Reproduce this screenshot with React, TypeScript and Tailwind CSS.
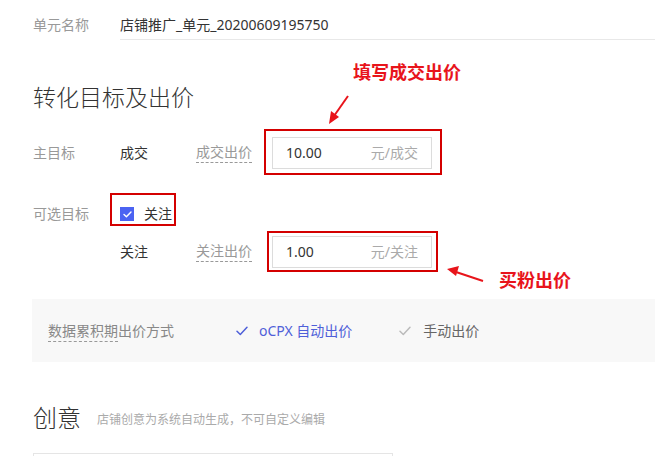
import React from "react";

const font = { fontFamily: '"Noto Sans", "Noto Sans CJK SC", sans-serif' };

function Check({ color }: { color: string }) {
  return (
    <svg width="12" height="10" viewBox="0 0 12 10" fill="none">
      <path d="M1 5.2 L4.3 8.5 L11 1.2" stroke={color} strokeWidth="1.5" strokeLinecap="round" strokeLinejoin="round" />
    </svg>
  );
}

function PriceInput({ value, suffix }: { value: string; suffix: string }) {
  return (
    <div className="w-[160px] h-[32px] border border-[#dcdcdc] flex items-center justify-between pl-[13px] pr-[13px] text-[14px] leading-[18px]">
      <span className="text-[#333]">{value}</span>
      <span className="text-[#aaa]">{suffix}</span>
    </div>
  );
}

export default function App() {
  return (
    <div className="relative w-[655px] h-[456px] overflow-hidden bg-white text-[14px] leading-[18px]" style={font}>
      <div className="pl-[33px] flex flex-col">
        {/* unit name */}
        <div className="flex mt-[10px] h-[30px]">
          <div className="w-[87px] flex items-center text-[#999]">单元名称</div>
          <div className="flex-1 flex items-center border-b border-[#e8e8e8] text-[#333]">店铺推广_单元_20200609195750</div>
        </div>

        {/* heading */}
        <div className="mt-[42px] h-[30px] leading-[30px] text-[23px] font-light text-[#333]">转化目标及出价</div>

        {/* main goal */}
        <div className="mt-[25px] h-[32px] flex items-center">
          <div className="w-[87px] text-[#999]">主目标</div>
          <div className="w-[76px] text-[#333]">成交</div>
          <div className="w-[76px]">
            <span className="inline-block text-[#999] border-b border-dashed border-[#999] pb-[1px]">成交出价</span>
          </div>
          <PriceInput value="10.00" suffix="元/成交" />
        </div>

        {/* optional goal */}
        <div className="mt-[35px] h-[20px] flex items-center">
          <div className="w-[87px] text-[#999]">可选目标</div>
          <div className="flex items-center gap-[10px]">
            <div className="w-[14px] h-[14px] bg-[#4b63f2] flex items-center justify-center">
              <svg width="9" height="7" viewBox="0 0 9 7" fill="none">
                <path d="M1 3.5 L3.4 5.8 L8 1" stroke="white" strokeWidth="1.4" strokeLinecap="round" strokeLinejoin="round" />
              </svg>
            </div>
            <span className="text-[#333]">关注</span>
          </div>
        </div>

        {/* follow price */}
        <div className="mt-[12px] h-[32px] flex items-center">
          <div className="w-[87px]" />
          <div className="w-[76px] text-[#333]">关注</div>
          <div className="w-[76px]">
            <span className="inline-block text-[#999] border-b border-dashed border-[#999] pb-[1px]">关注出价</span>
          </div>
          <PriceInput value="1.00" suffix="元/关注" />
        </div>

        {/* panel */}
        <div className="mt-[31px] -ml-px h-[63px] bg-[#f8f8f8] flex items-center pl-[16px]">
          <div className="w-[188px] text-[#888]">
            <span className="border-b border-dashed border-[#999] pb-[1px]">数据累积期</span>出价方式
          </div>
          <div className="flex items-center gap-[11px] text-[#4f60d9]">
            <Check color="#4f60d9" />
            <span>oCPX 自动出价</span>
          </div>
          <div className="ml-[47px] flex items-center gap-[12px] text-[#666]">
            <Check color="#bbbbbb" />
            <span>手动出价</span>
          </div>
        </div>

        {/* creative */}
        <div className="mt-[40px] h-[32px] flex items-end gap-[16px]">
          <span className="text-[24px] leading-[32px] font-light text-[#333]">创意</span>
          <span className="text-[12px] leading-[16px] text-[#aaa] pb-[6px]">店铺创意为系统自动生成，不可自定义编辑</span>
        </div>

        <div className="mt-[19px] w-[360px] h-[40px] border border-[#e5e5e5]" />
      </div>

      {/* annotations */}
      <div className="absolute left-[264px] top-[129px] w-[178px] h-[46px] border-2 border-[#d40000]" />
      <div className="absolute left-[110px] top-[193px] w-[66px] h-[33px] border-2 border-[#d40000]" />
      <div className="absolute left-[267px] top-[231px] w-[171px] h-[41px] border-2 border-[#d40000]" />

      <div className="absolute left-[353px] top-[61px] text-[18px] leading-[22px] font-bold text-[#e8141b]">填写成交出价</div>
      <div className="absolute left-[499px] top-[269px] text-[18px] leading-[22px] font-bold text-[#e8141b]">买粉出价</div>

      <svg className="absolute left-0 top-0" width="655" height="456" viewBox="0 0 655 456">
        <line x1="348" y1="96" x2="334" y2="116" stroke="#e8141b" strokeWidth="2" />
        <polygon points="329,124 331,111 339,117" fill="#e8141b" />
        <line x1="483" y1="281" x2="456" y2="272" stroke="#e8141b" strokeWidth="2" />
        <polygon points="447,269 459,266 456,276" fill="#e8141b" />
      </svg>
    </div>
  );
}
